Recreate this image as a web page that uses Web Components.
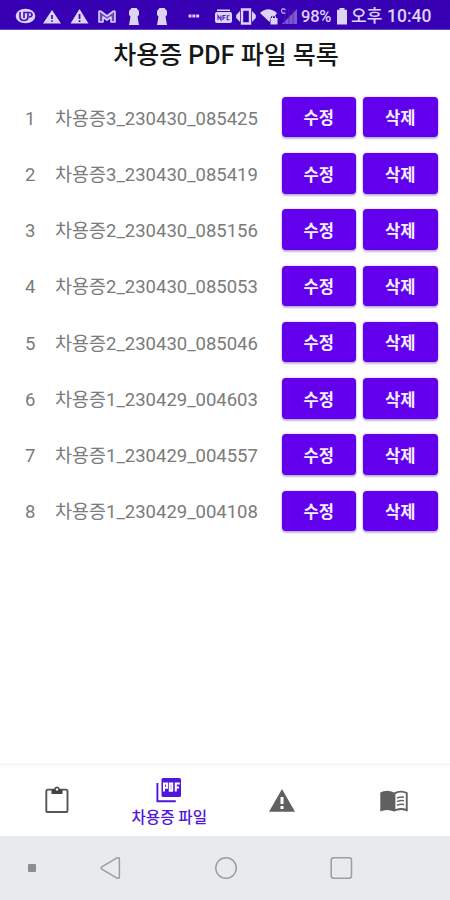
<!DOCTYPE html>
<html lang="ko">
<head>
<meta charset="utf-8">
<title>차용증 PDF 파일 목록</title>
<style>
html,body{margin:0;height:100%;background:#fff}
body{font-family:Roboto,"Noto Sans CJK KR",sans-serif;overflow:hidden}
</style>
</head>
<body>
<loan-app></loan-app>
<script>
function define(name, html, setup) {
  const t = document.createElement('template');
  t.innerHTML = html;
  customElements.define(name, class extends HTMLElement {
    constructor() {
      super();
      this.attachShadow({mode: 'open'}).append(t.content.cloneNode(true));
    }
    connectedCallback() { if (setup) setup(this, this.shadowRoot); }
  });
}

define('status-bar', `
<style>
:host{display:grid;box-sizing:border-box;height:30px;padding-left:15px;background:#3700b3;color:#dcd3f5;border-bottom:1px solid #6247c4;
 grid-template-columns:28px 27px 27px 31px 28px 32px 26px 22px 24px 20px 20px 36px 14px 37px auto;align-items:center;font-size:16.5px;font-weight:500;line-height:29px;white-space:nowrap}
svg{display:block;fill:#dcd3f5;height:22px;width:22px;margin-top:2px}
span{margin-top:2px}
.pct{letter-spacing:-.2px;margin-left:1px}
.pm{font-size:17px;margin-left:1px}
.time{font-size:17.5px}
</style>
<svg viewBox="0 0 22 22"><ellipse cx="10.500" cy="10" rx="9.800" ry="7.300"/><path d="M5 6v4.500q0 4 4 4t4-4V7M9 12V6.500h5q3 0 3 2.200t-3 2.200" fill="none" stroke="#4a1bbb" stroke-width="1.700"/></svg>
<svg viewBox="0 0 22 22"><path d="M9 4 18 17.500H0z"/><path d="M8.200 9h1.600v4H8.200zM8.200 14.200h1.600v1.600H8.200z" fill="#3700b3"/></svg>
<svg viewBox="0 0 22 22"><path d="M9.500 3 18.500 17.500H.5z"/><path d="M8.700 8h1.700v5H8.700zM8.700 14.200h1.700v1.700H8.700z" fill="#3700b3"/></svg>
<svg viewBox="0 0 22 22"><path d="M2 16V6.500Q2 4 4 5.500L10 10 16 5.500Q18 4 18 6.500V16H14V11L10 14 6 11V16z" fill="#6a45c6" stroke="#dcd3f5" stroke-width="1.600" stroke-linejoin="round"/></svg>
<svg viewBox="0 0 22 22"><path d="M3.500 2h5L11 5v4L9.500 10.500 11 19h-10L2.500 10.500 1 9V5z"/></svg>
<svg viewBox="0 0 22 22"><path d="M3.500 2h5L11 5v4L9.500 10.500 11 19h-10L2.500 10.500 1 9V5z"/></svg>
<svg viewBox="0 0 22 22"><path d="M.6 8.500h2.900v2.900H.6zM4.400 8.500h2.900v2.900H4.400zM8.200 8.500h2.900v2.900H8.200z"/></svg>
<svg viewBox="0 0 22 22"><path d="M3 3.500h13v1.500H3z"/><rect x="1" y="6" width="17" height="11" rx="2"/><path d="M4 14v-4.500l3 4.500v-4.500M9 14v-4.500h2.500M9 11.800h2.500M15.500 9.700h-2.300v4.100h2.300" stroke="#4a1bbb" stroke-width="1.100" fill="none"/></svg>
<svg viewBox="0 0 22 22"><path d="M6 3.500h8v14H6z" fill="none" stroke="#dcd3f5" stroke-width="2.400"/><path d="M4 5v11L.2 12V9zM16 5v11l3.800-4V9z"/></svg>
<svg viewBox="0 0 22 22"><path d="M0 7Q8-.5 17 7L15 10Q11 9 10.500 12L9.500 16z"/><path d="M10.500 12h7v6.500h-7z"/><path d="M12.500 12v-1.500q1.500-2 3 0V12" fill="none" stroke="#dcd3f5"/></svg>
<svg viewBox="0 0 22 22"><path d="M17 3v15H2z" fill="#7c5bcf"/><path d="M5 18V3M9 18V3M13 18V3" stroke="#4b20ba" stroke-width=".8"/><path d="M5.500 4Q1.500 1 1.500 5.200 2 8 5.500 7" fill="none" stroke="#b7a4e5" stroke-width="1.300"/></svg>
<span class="pct">98%</span>
<svg viewBox="0 0 22 22"><path d="M3.500 2h5V3.800h2.500V18.500H1V3.800h2.500z"/></svg>
<span class="pm">오후</span><span class="time">10:40</span>`);

define('file-button', `
<style>
:host{display:flex;box-sizing:border-box;width:74.500px;height:40.500px;border-radius:4px;background:#6200ee;color:#f5effe;align-items:center;justify-content:center;
 font-size:16.500px;font-weight:700;line-height:20px;box-shadow:0 1.500px 2px rgba(60,40,130,.3),0 0 2px rgba(98,0,238,.35)}
span{margin-top:4.500px}
</style><span><slot></slot></span>`);

define('file-row', `
<style>
:host{display:flex;height:56.250px;align-items:center;color:#7b7b7b;font-size:18.500px;line-height:24px;box-sizing:border-box}
.no{width:31px;margin-left:25px;margin-top:3px}
.name{flex:1;white-space:nowrap;margin-left:-1px;margin-top:3px}
file-button+file-button{margin:0 12.500px 0 7px}
</style>
<span class="no"></span><span class="name"><slot></slot></span>
<file-button>수정</file-button><file-button>삭제</file-button>`,
(el, root) => { root.querySelector('.no').textContent = el.getAttribute('no'); });

define('nav-tab', `
<style>
:host{display:flex;flex:1 1 0;flex-direction:column;align-items:center;justify-content:center;color:#606060;font-size:15.600px;line-height:20px;font-weight:500;padding:0 0 2px 1px;white-space:nowrap}
:host([active]){color:#5016dc;padding-bottom:0;padding-top:3px;gap:3px}
::slotted(svg){display:block;width:28px;height:28px;fill:currentColor}
</style><slot name="icon"></slot><slot></slot>`);

define('tab-bar', `
<style>
:host{display:flex;box-sizing:border-box;height:73px;border-top:3px solid #f8f8f8;background:#fff}
</style>
<nav-tab><svg slot="icon" viewBox="0 0 28 28"><rect x="3.300" y="3.600" width="21.200" height="22.400" rx="1.600" fill="none" stroke="#555" stroke-width="1.900"/><path d="M8.500 3.200h2.500Q11.800.4 14 .4t3 2.800h2.500V8h-11z" fill="#444"/><circle cx="14" cy="3.400" r="1.200" fill="#fff"/></svg></nav-tab>
<nav-tab active><svg slot="icon" viewBox="0 0 28 28"><path d="M8 1H24.500Q26 1 26 2.500V18.500Q26 20 24.500 20H8Q6.500 20 6.500 18.500V2.500Q6.500 1 8 1z"/><path d="M2.400 6V24.300H20.800" fill="none" stroke="currentColor" stroke-width="1.900"/><path d="M9 14.500V6.500h3v4.200H9M14.800 6.500v7.200h2.400V6.500zM20.800 14.500V6.500h4M20.800 10.500h3.200" fill="none" stroke="#fff" stroke-width="2"/></svg>차용증 파일</nav-tab>
<nav-tab><svg slot="icon" viewBox="0 0 28 28"><path d="M14 3 27 25.800H1z"/><path d="M12.500 11h3v7h-3zM12.500 20h3v3h-3z" fill="#fff"/></svg></nav-tab>
<nav-tab><svg slot="icon" viewBox="0 0 28 28"><path d="M.3 6.500Q7 3 14 6.500 21 3 27.700 6.500V25.500Q21 22.500 14 25.500 7 22.500.3 25.500z"/><path d="M15.400 8Q20.500 5.500 25.800 7.500V22.800Q20.500 21.200 15.400 23.300z" fill="#fff"/><path d="M17 12Q20.500 10.500 24 11.200M17 15.600Q20.500 14.100 24 14.800M17 19.200Q20.500 17.700 24 18.400" stroke="#666" stroke-width="1.500" fill="none"/></svg></nav-tab>`);

define('system-nav', `
<style>
:host{display:grid;box-sizing:border-box;height:64px;background:#e8eaed;grid-template-columns:28px 72px 114.500px 115px auto;align-items:center}
i{width:8px;height:8px;background:#8b8d90;border-radius:1px}
svg{display:block;width:24px;height:24px;fill:none;stroke:#9b9da0;stroke-width:1.500;stroke-linejoin:round}
</style>
<b></b><i></i>
<svg viewBox="0 0 24 24"><path d="M1.800 10.800 17 1.900Q19.400 1 19.400 3.200V20.800Q19.400 23 17 22.100L1.800 13.200Q.7 12 1.800 10.800z"/></svg>
<svg viewBox="0 0 24 24"><circle cx="11" cy="12" r="10.300"/></svg>
<svg viewBox="0 0 24 24"><rect x="1.200" y="1.700" width="20.300" height="20.600" rx="2.500"/></svg>`);

define('loan-app', `
<style>
:host{display:flex;flex-direction:column;width:450px;height:900px;background:#fff}
h1{margin:0;height:59px;box-sizing:border-box;padding:8px 0 0 2px;text-align:center;font-size:25px;line-height:36px;font-weight:500;color:#161616}
main{flex:1}
</style>
<status-bar></status-bar>
<h1>차용증 PDF 파일 목록</h1>
<main></main>
<tab-bar></tab-bar>
<system-nav></system-nav>`,
(el, root) => {
  const names = ['차용증3_230430_085425','차용증3_230430_085419','차용증2_230430_085156','차용증2_230430_085053','차용증2_230430_085046','차용증1_230429_004603','차용증1_230429_004557','차용증1_230429_004108'];
  names.forEach((name, i) => {
    const row = document.createElement('file-row');
    row.setAttribute('no', i + 1);
    row.textContent = name;
    root.querySelector('main').append(row);
  });
});
</script>
</body>
</html>
